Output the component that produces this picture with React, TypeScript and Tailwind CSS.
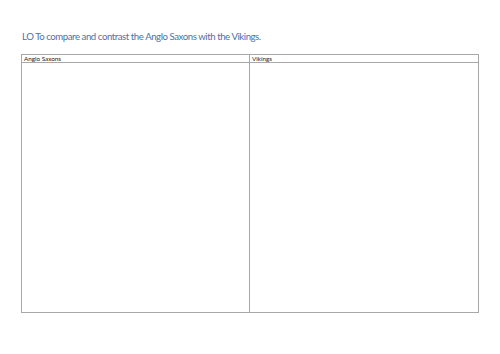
export default function App() {
  return (
    <div className="w-[500px] h-[354px] bg-white font-['Lato',sans-serif]">
      <div className="pt-[30px] pl-[22px] text-[9.6px] leading-[14px] text-[#4a6fb5] tracking-[-0.43px]">
        LO To compare and contrast the Anglo Saxons with the Vikings.
      </div>
      <div className="ml-[21px] mt-[10px] w-[458px] h-[259px] border border-[#a8a8a8] grid grid-cols-[228px_1fr] grid-rows-[8px_1fr]">
        <div className="border-r border-b border-[#a8a8a8] text-[6.3px] leading-[7px] pl-[2px] text-[#222]">Anglo Saxons</div>
        <div className="border-b border-[#a8a8a8] text-[6.3px] leading-[7px] pl-[2px] text-[#222]">Vikings</div>
        <div className="border-r border-[#a8a8a8]"></div>
        <div></div>
      </div>
    </div>
  );
}
